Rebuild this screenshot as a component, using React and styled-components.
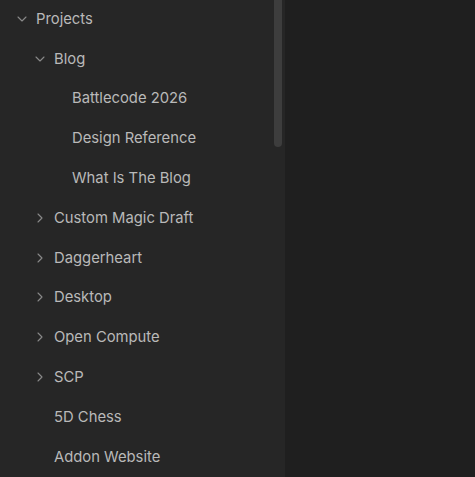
import React from "react";
import styled, { createGlobalStyle } from "styled-components";
import { ChevronDown, ChevronRight } from "lucide-react";

const Global = createGlobalStyle`
  html, body { margin: 0; padding: 0; background: #1f1f1f; height: 100%; overflow: hidden; }
  #root { height: 100%; }
`;

const Layout = styled.div`
  display: flex;
  height: 477px;
  width: 475px;
  font-family: Inter, "Noto Sans", sans-serif;
`;

const Sidebar = styled.aside`
  position: relative;
  width: 285px;
  flex: none;
  background: #262626;
  overflow: hidden;
`;

const Main = styled.main`
  flex: 1;
  background: #1f1f1f;
`;

const Thumb = styled.div`
  position: absolute;
  top: 0;
  right: 3px;
  width: 8px;
  height: 147px;
  background: #3d3d3d;
  border-radius: 0 0 4px 4px;
`;

const List = styled.ul`
  list-style: none;
  margin: -1px 0 0;
  padding: 0;
`;

const Row = styled.li`
  display: flex;
  align-items: center;
  gap: 6px;
  height: 39.8px;
  padding-left: ${(p) => 14 + p.$depth * 18}px;
  color: #b9b9b9;
  font-size: 14.8px;
  white-space: nowrap;
`;

const Icon = styled.span`
  display: flex;
  width: 16px;
  height: 16px;
  flex: none;
  color: #8a8a8a;
`;

const items = [
  { label: "Projects", depth: 0, state: "open" },
  { label: "Blog", depth: 1, state: "open" },
  { label: "Battlecode 2026", depth: 2 },
  { label: "Design Reference", depth: 2 },
  { label: "What Is The Blog", depth: 2 },
  { label: "Custom Magic Draft", depth: 1, state: "closed" },
  { label: "Daggerheart", depth: 1, state: "closed" },
  { label: "Desktop", depth: 1, state: "closed" },
  { label: "Open Compute", depth: 1, state: "closed" },
  { label: "SCP", depth: 1, state: "closed" },
  { label: "5D Chess", depth: 1 },
  { label: "Addon Website", depth: 1 },
];

export default function App() {
  return (
    <>
      <Global />
      <Layout>
        <Sidebar>
          <List>
            {items.map((it) => (
              <Row key={it.label} $depth={it.depth}>
                <Icon>
                  {it.state === "open" && <ChevronDown size={16} strokeWidth={1.6} />}
                  {it.state === "closed" && <ChevronRight size={16} strokeWidth={1.6} />}
                </Icon>
                {it.label}
              </Row>
            ))}
          </List>
          <Thumb />
        </Sidebar>
        <Main />
      </Layout>
    </>
  );
}
